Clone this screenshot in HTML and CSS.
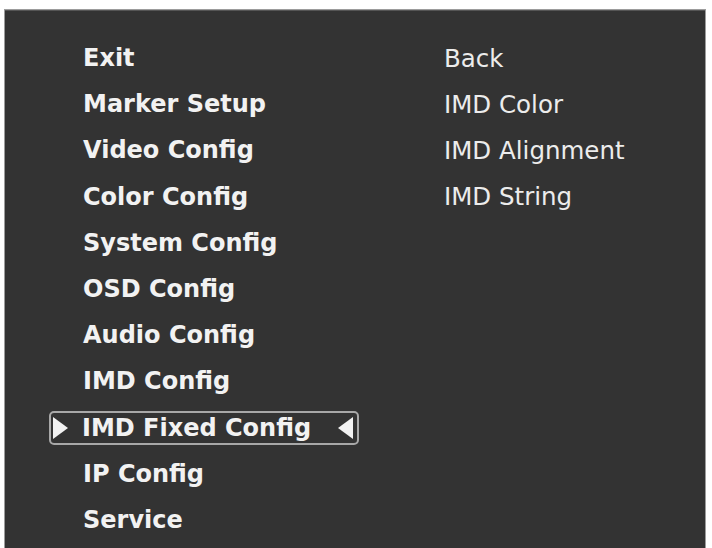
FILE: index.html
```html
<!DOCTYPE html>
<html>
<head>
<meta charset="utf-8">
<link rel="stylesheet" href="styles.css">
</head>
<body>
<div class="panel">
  <div class="menu">
    <ul class="col left">
      <li class="item">Exit</li>
      <li class="item">Marker Setup</li>
      <li class="item">Video Config</li>
      <li class="item">Color Config</li>
      <li class="item">System Config</li>
      <li class="item">OSD Config</li>
      <li class="item">Audio Config</li>
      <li class="item">IMD Config</li>
      <li class="item selected">
        <span class="sel">
          <svg class="tri" width="15" height="22" viewBox="0 0 15 22"><polygon points="0,0 15,11 0,22" fill="#f2f2f2"/></svg>
          <span class="label">IMD Fixed Config</span>
          <svg class="tri tri-r" width="15" height="22" viewBox="0 0 15 22"><polygon points="15,0 0,11 15,22" fill="#f2f2f2"/></svg>
        </span>
      </li>
      <li class="item">IP Config</li>
      <li class="item">Service</li>
    </ul>
    <ul class="col right">
      <li class="item">Back</li>
      <li class="item">IMD Color</li>
      <li class="item">IMD Alignment</li>
      <li class="item">IMD String</li>
    </ul>
  </div>
</div>
</body>
</html>
```

FILE: styles.css
```css
html, body {
  margin: 0;
  padding: 0;
  background: #ffffff;
  height: 100%;
  overflow: hidden;
}
.panel {
  margin: 9px 0 0 4px;
  width: 700px;
  height: 560px;
  background: #333333;
  border: 1px solid #9c9c9c;
  border-bottom: none;
  box-shadow: inset 0 1px 0 #555;
}
.menu {
  display: grid;
  grid-template-columns: 395px 1fr;
  padding: 25px 0 0 44px;
}
.col {
  list-style: none;
  margin: 0;
  padding: 0;
}
.item {
  height: 46.2px;
  display: flex;
  align-items: center;
  color: #f2f2f2;
  font-size: 24px;
  white-space: nowrap;
}
.left .item {
  font-family: "DejaVu Sans", Verdana, sans-serif;
  font-weight: bold;
  padding-left: 34px;
}
.right .item {
  font-family: "DejaVu Sans", Verdana, sans-serif;
  font-weight: normal;
  font-size: 24.5px;
  color: #ececec;
}
.left .item.selected {
  padding-left: 0;
}
.sel {
  display: inline-flex;
  align-items: center;
  box-sizing: border-box;
  height: 34px;
  width: 310px;
  border: 2px solid #a8a8a8;
  border-radius: 5px;
  padding: 0 4px 0 2px;
}
.tri {
  flex: none;
  display: block;
}
.label {
  margin-left: 14px;
  flex: 1;
}
```
